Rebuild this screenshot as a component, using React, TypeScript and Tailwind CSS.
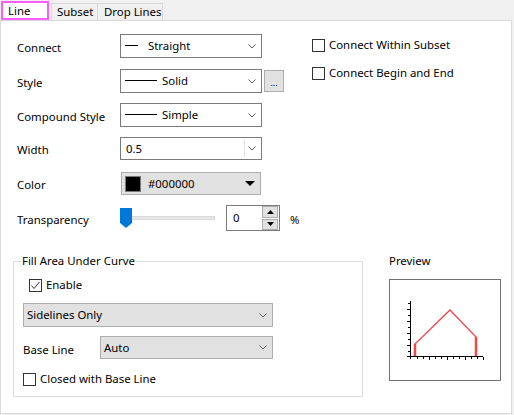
import { FC, PropsWithChildren } from 'react';

const Chevron: FC = () => (
  <svg width="8" height="5" viewBox="0 0 8 5" className="shrink-0">
    <path d="M0.5 0.5 L4 4 L7.5 0.5" stroke="#606060" strokeWidth="1" fill="none" />
  </svg>
);

interface ComboProps {
  width: string;
  height: string;
  button?: boolean;
  split?: boolean;
}

const Combo: FC<PropsWithChildren<ComboProps>> = ({ width, height, button, split, children }) => (
  <div
    className={`${width} ${height} shrink-0 flex items-center border ${
      button ? 'bg-[#e1e1e1] border-[#adadad]' : 'bg-white border-[#7a7a7a]'
    }`}
  >
    <div className="flex-1 flex items-center min-w-0">{children}</div>
    {split && <div className="w-px self-stretch my-px bg-[#e3e3e3]" />}
    <div className="w-[14px] flex justify-center mr-[2px]">
      <Chevron />
    </div>
  </div>
);

const CheckBox: FC<{ checked?: boolean }> = ({ checked }) => (
  <div className="w-[13px] h-[13px] border border-[#333333] bg-white flex items-center justify-center shrink-0">
    {checked && (
      <svg width="11" height="11" viewBox="0 0 11 11">
        <path d="M1.5 5.5 L4 8.5 L9.5 2" stroke="#333333" strokeWidth="1" fill="none" />
      </svg>
    )}
  </div>
);

const CheckRow: FC<{ label: string; checked?: boolean; className?: string }> = ({
  label,
  checked,
  className,
}) => (
  <div className={`h-[14px] flex items-center gap-[4px] whitespace-nowrap ${className ?? ''}`}>
    <CheckBox checked={checked} />
    <span className="leading-none">{label}</span>
  </div>
);

const Row: FC<PropsWithChildren<{ label: string; h: string; mt: string }>> = ({
  label,
  h,
  mt,
  children,
}) => (
  <div className={`flex items-center ${h} ${mt}`}>
    <div className="w-[103px] shrink-0 whitespace-nowrap pt-[3px]">{label}</div>
    {children}
  </div>
);

const LineSample: FC<{ w: string }> = ({ w }) => <div className={`${w} h-px bg-black shrink-0`} />;

const Preview: FC = () => {
  const yTicks = [23, 29, 35, 41, 47, 53, 59, 65, 71];
  const xTicks = [27, 33, 39, 45, 51, 57, 63, 69, 75, 81, 87, 93];
  return (
    <svg width="110" height="100" viewBox="0 0 110 100">
      <line x1="20.5" y1="21" x2="20.5" y2="79" stroke="black" />
      <line x1="17" y1="76.5" x2="93" y2="76.5" stroke="black" />
      {yTicks.map((y, i) => (
        <line key={y} x1={i % 2 ? 17 : 18} y1={y + 0.5} x2="20" y2={y + 0.5} stroke="black" />
      ))}
      {xTicks.map((x, i) => (
        <line key={x} x1={x + 0.5} y1="77" x2={x + 0.5} y2={i % 3 === 2 ? 80 : 79} stroke="black" />
      ))}
      <polyline points="25,76 25,64 60,30 86,57 86,76" fill="none" stroke="#f04848" strokeWidth="1.3" />
      <line x1="25" y1="64" x2="25" y2="76" stroke="#f04848" strokeWidth="2.5" />
      <line x1="86" y1="57" x2="86" y2="76" stroke="#f04848" strokeWidth="2.5" />
    </svg>
  );
};

export default function App() {
  return (
    <div className="w-[514px] h-[415px] bg-[#f0f0f0] font-['Noto_Sans',sans-serif] text-[11.4px] text-black overflow-hidden">
      {/* tabs */}
      <div className="h-[20px] flex items-end whitespace-nowrap">
        <div className="ml-[1px] h-[19px] w-[48px] border-2 border-[#ff5cff] bg-white flex items-center pl-[5px]">
          Line
        </div>
        <div className="ml-[2px] h-[17px] w-[47px] border-l border-t border-r border-[#d9d9d9] flex items-center pl-[5px]">
          Subset
        </div>
        <div className="h-[17px] w-[65px] border-t border-r border-[#d9d9d9] flex items-center pl-[6px]">
          Drop Lines
        </div>
      </div>

      {/* panel */}
      <div className="w-[512px] h-[394px] bg-white border border-[#d9d9d9] pt-[13px]">
        <div className="flex">
          <div className="w-[295px] pl-[16px] shrink-0">
            <Row label="Connect" h="h-[24px]" mt="mt-0">
              <Combo width="w-[142px]" height="h-[24px]">
                <div className="ml-[4px] mr-[10px]">
                  <LineSample w="w-[13px]" />
                </div>
                <span>Straight</span>
              </Combo>
            </Row>
            <Row label="Style" h="h-[24px]" mt="mt-[11px]">
              <Combo width="w-[142px]" height="h-[24px]">
                <div className="ml-[4px] mr-[5px]">
                  <LineSample w="w-[32px]" />
                </div>
                <span>Solid</span>
              </Combo>
              <div className="ml-[2px] w-[20px] h-[22px] shrink-0 bg-[#e1e1e1] border border-[#adadad] flex items-end justify-center text-[9px] leading-[12px] pb-[2px]">
                ...
              </div>
            </Row>
            <Row label="Compound Style" h="h-[24px]" mt="mt-[10px]">
              <Combo width="w-[142px]" height="h-[24px]">
                <div className="ml-[4px] mr-[5px]">
                  <LineSample w="w-[32px]" />
                </div>
                <span>Simple</span>
              </Combo>
            </Row>
            <Row label="Width" h="h-[23px]" mt="mt-[10px]">
              <Combo width="w-[142px]" height="h-[23px]" split>
                <span className="ml-[5px]">0.5</span>
              </Combo>
            </Row>
            <Row label="Color" h="h-[23px]" mt="mt-[12px]">
              <div className="ml-px w-[140px] h-[23px] shrink-0 bg-[#e1e1e1] border border-[#adadad] flex items-center">
                <div className="ml-[3px] w-[16px] h-[16px] border border-[#7a7a7a] bg-black" />
                <span className="ml-[7px] flex-1">#000000</span>
                <svg width="10" height="5" viewBox="0 0 10 5" className="mr-[5px]">
                  <path d="M0 0 L10 0 L5 5 Z" fill="black" />
                </svg>
              </div>
            </Row>
            <Row label="Transparency" h="h-[26px]" mt="mt-[10px]">
              <div className="relative w-[95px] h-[20px] shrink-0 flex items-center">
                <div className="w-full h-[4px] bg-[#e7e7e7] border border-[#dadada]" />
                <svg width="12" height="20" viewBox="0 0 12 20" className="absolute left-0 top-0">
                  <path d="M0 0 L12 0 L12 15 L6 20 L0 15 Z" fill="#0078d7" />
                </svg>
              </div>
              <div className="ml-[11px] w-[54px] h-[26px] shrink-0 border border-[#7a7a7a] flex items-center">
                <span className="ml-[6px] flex-1">0</span>
                <div className="w-[16px] h-[24px] flex flex-col gap-px mr-px">
                  <div className="flex-1 bg-[#e1e1e1] border border-[#adadad] flex items-center justify-center">
                    <svg width="7" height="4" viewBox="0 0 7 4">
                      <path d="M0 4 L7 4 L3.5 0 Z" fill="black" />
                    </svg>
                  </div>
                  <div className="flex-1 bg-[#e1e1e1] border border-[#adadad] flex items-center justify-center">
                    <svg width="7" height="4" viewBox="0 0 7 4">
                      <path d="M0 0 L7 0 L3.5 4 Z" fill="black" />
                    </svg>
                  </div>
                </div>
              </div>
              <span className="ml-[10px] pt-[3px]">%</span>
            </Row>
          </div>

          <div className="pl-[16px]">
            <CheckRow label="Connect Within Subset" className="mt-[4px]" />
            <CheckRow label="Connect Begin and End" className="mt-[14px]" />
          </div>
        </div>

        {/* bottom */}
        <div className="flex mt-[22px]">
          <fieldset className="ml-[12px] w-[350px] h-[144px] border border-[#dcdcdc]">
            <legend className="ml-[7px] px-px leading-[16px]">Fill Area Under Curve</legend>
            <div className="pl-[9px]">
              <CheckRow label="Enable" checked className="mt-[9px] ml-[6px]" />
              <div className="mt-[11px]">
                <Combo width="w-[250px]" height="h-[24px]" button>
                  <span className="ml-[3px]">Sidelines Only</span>
                </Combo>
              </div>
              <div className="mt-[9px] flex items-center h-[23px]">
                <div className="w-[77px] pt-[4px]">Base Line</div>
                <Combo width="w-[173px]" height="h-[23px]" button>
                  <span className="ml-[3px]">Auto</span>
                </Combo>
              </div>
              <CheckRow label="Closed with Base Line" className="mt-[13px]" />
            </div>
          </fieldset>
          <div className="ml-[26px]">
            <div className="leading-[16px]">Preview</div>
            <div className="mt-[10px] w-[112px] h-[102px] border border-[#707070]">
              <Preview />
            </div>
          </div>
        </div>
      </div>
    </div>
  );
}
